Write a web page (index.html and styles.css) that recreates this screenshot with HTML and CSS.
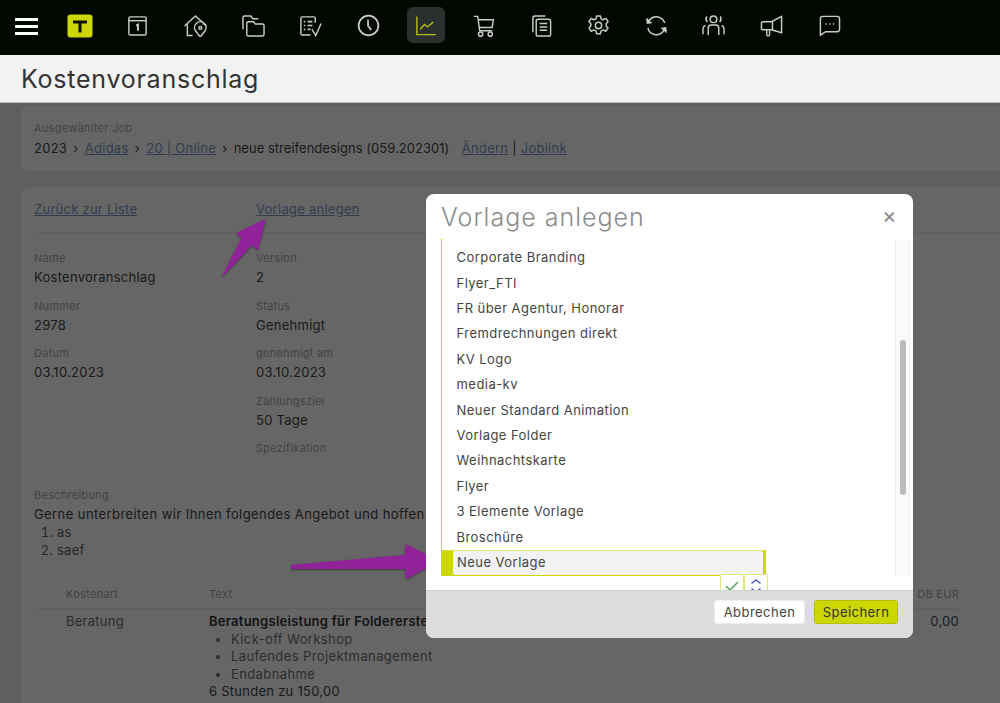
FILE: index.html
```html
<!DOCTYPE html>
<html lang="de">
<head>
<meta charset="utf-8">
<title>Kostenvoranschlag</title>
<link rel="stylesheet" href="styles.css">
</head>
<body>
<header class="topbar">
  <button class="burger" aria-label="Menü"><span></span><span></span><span></span></button>
  <div class="logo"><svg viewBox="0 0 26 24" width="26" height="24"><rect x="0.5" y="0.5" width="25" height="23" rx="3" fill="#ccd600"/><path d="M6 6.500h14v3h-5.500v9h-3v-9H6z" fill="#0a0f00"/></svg></div>
  <nav class="nav">
    <a class="nav-item"><svg viewBox="0 0 24 24"><rect x="3" y="3" width="18" height="19" rx="1.500"/><path d="M3 7h18"/><path d="M10.500 12l2-1v6.500" stroke-width="2"/></svg></a>
    <a class="nav-item"><svg viewBox="0 0 24 24"><path d="M0.500 12.500L12 2l11.500 10.500"/><path d="M3.500 10.500V22.500H9"/><path d="M20.500 10V11"/><path d="M17 24l-5-6.500a6 6 0 1 1 10 0z"/><circle cx="17" cy="14.500" r="1.500"/></svg></a>
    <a class="nav-item"><svg viewBox="0 0 24 24"><path d="M1 16V3.500Q1 2 2.500 2H9l2.500 3H17"/><path d="M5 9.500Q5 8 6.500 8H12l2 2.500h7.500Q23 10.500 23 12v9.500Q23 23 21.500 23h-15Q5 23 5 21.500z"/></svg></a>
    <a class="nav-item"><svg viewBox="0 0 24 24"><path d="M17 9V4.500Q17 3 15.500 3h-12Q2 3 2 4.500v16Q2 22 3.500 22H12"/><path d="M5 8h1.500M9 8h5M5 12h1.500M9 12h5M5 16h1.500M9 16h3" stroke-width="1.800"/><path d="M13.500 16l4 6.500L23 10"/></svg></a>
    <a class="nav-item"><svg viewBox="0 0 24 24"><circle cx="12" cy="12" r="10.300" stroke-width="1.800"/><path d="M11.500 6v6.500l3.500 4" stroke-width="1.800"/></svg></a>
    <a class="nav-item active"><svg viewBox="0 0 24 24"><path d="M3 2.500V21.500H22.500"/><path d="M6.500 16l4.500-5 3 2.500 6-5"/></svg></a>
    <a class="nav-item"><svg viewBox="0 0 24 24"><path d="M2 2.500h4l2 15h13"/><path d="M6.300 6h16l-1.300 8H7.500"/><circle cx="9" cy="21" r="2.200"/><circle cx="19" cy="21" r="2.200"/></svg></a>
    <a class="nav-item"><svg viewBox="0 0 24 24"><path d="M16 2H5.500Q3 2 3 4.500V19"/><rect x="6.500" y="5.500" width="15" height="17.500" rx="2"/><path d="M10 10h8M10 13.500h8M10 17h8"/></svg></a>
    <a class="nav-item"><svg viewBox="0 0 24 24"><circle cx="12" cy="12" r="3.300"/><path d="M10 2h4l.7 3 2.100 1 2.800-1.400 2.400 3.200-2 2.300v2.400l2 2.300-2.400 3.200-2.800-1.400-2.100 1-.7 3h-4l-.7-3-2.100-1-2.800 1.400-2.400-3.200 2-2.300v-2.400l-2-2.300L4.400 4.600 7.200 6l2.100-1z" stroke-linejoin="round"/></svg></a>
    <a class="nav-item"><svg viewBox="0 0 24 24"><path d="M20.500 9.500A9 9 0 0 0 5 6l-2.500 3"/><path class="solid" d="M2 4.500l.5 5 4.500-.5"/><path d="M3 14.500A9 9 0 0 0 19 18l2.500-3"/><path class="solid" d="M22 19.500l-.5-5-4.500.5"/></svg></a>
    <a class="nav-item"><svg viewBox="0 0 24 24"><circle cx="12" cy="5.500" r="3.500"/><path d="M5 2.500Q3 5.500 5.500 8.500M19 2.500Q21 5.500 18.500 8.500"/><path d="M6.500 22V14.500Q6.500 11.500 9.500 11.500h5Q17.500 11.500 17.500 14.500V22"/><path d="M1 21v-5.500Q1 13 3.500 12M23 21v-5.500Q23 13 20.500 12"/></svg></a>
    <a class="nav-item"><svg viewBox="0 0 24 24"><path d="M22.500 2.500v17L12 16.500H3.500Q1.500 16.500 1.500 14.500V9.500Q1.500 8 3.500 8H12z"/><path d="M7 16.500V21.500Q7 23 8.500 23t1.500-1.500V17"/><path d="M13 8v8.500"/></svg></a>
    <a class="nav-item"><svg viewBox="0 0 24 24"><path d="M5 2.500h15Q22.500 2.500 22.500 5v11Q22.500 18.500 20 18.500H8L2.500 22V5Q2.500 2.500 5 2.500z"/><path d="M8 10.500h1M12 10.500h1M16 10.500h1" stroke-width="2"/></svg></a>
  </nav>
</header>
<div class="pagehead"><h1 class="pagetitle">Kostenvoranschlag</h1></div>
<main class="content">
  <section class="card jobcard">
    <div class="label">Ausgewählter Job</div>
    <div class="crumbs">2023<i>›</i><a>Adidas</a><i>›</i><a>20 | Online</a><i>›</i><span class="jobname">neue streifendesigns (059.202301)</span><a class="crumb-link">Ändern</a> | <a>Joblink</a></div>
  </section>
  <section class="card detail">
    <div class="linkrow"><a>Zurück zur Liste</a><a>Vorlage anlegen</a></div>
    <div class="fields">
      <div class="col">
        <div class="field"><div class="label">Name</div><div>Kostenvoranschlag</div></div>
        <div class="field"><div class="label">Nummer</div><div>2978</div></div>
        <div class="field"><div class="label">Datum</div><div>03.10.2023</div></div>
      </div>
      <div class="col">
        <div class="field"><div class="label">Version</div><div>2</div></div>
        <div class="field"><div class="label">Status</div><div>Genehmigt</div></div>
        <div class="field"><div class="label">genehmigt am</div><div>03.10.2023</div></div>
        <div class="field"><div class="label">Zahlungsziel</div><div>50 Tage</div></div>
        <div class="field"><div class="label">Spezifikation</div></div>
      </div>
    </div>
    <div class="desc">
      <div class="label">Beschreibung</div>
      <div class="desctext">Gerne unterbreiten wir Ihnen folgendes Angebot und hoffen</div>
      <ol class="desclist"><li>as</li><li>saef</li></ol>
    </div>
    <div class="thead"><span class="label">Kostenart</span><span class="label">Text</span><span class="label amount">DB EUR</span></div>
    <div class="trow">
      <div class="soft">Beratung</div>
      <div>
        <strong>Beratungsleistung für Foldererstellung</strong>
        <ul class="tasks"><li>Kick-off Workshop</li><li>Laufendes Projektmanagement</li><li>Endabnahme</li></ul>
        <div>6 Stunden zu 150,00</div>
      </div>
      <div class="amount">0,00</div>
    </div>
  </section>
  <div class="overlay"></div>
</main>
<svg class="arrows" viewBox="0 0 1000 703" width="1000" height="703" aria-hidden="true">
  <defs><filter id="sh" x="-20%" y="-20%" width="140%" height="140%"><feDropShadow dx="0" dy="1" stdDeviation="1.200" flood-color="#000" flood-opacity=".45"/></filter></defs>
  <path class="arrow" d="M221.500 277.500L241.500 238L236 233L265.700 219L258 250L252 245Z"/>
  <path class="arrow" d="M291 565L405 555L405.500 544L439.500 561L406 579L405 569L291 569Z"/>
</svg>
<section class="modal">
  <div class="modal-head"><h2 class="modal-title">Vorlage anlegen</h2><span class="close">×</span></div>
  <div class="modal-body">
    <div class="list">
      <div class="item">Corporate Branding</div>
      <div class="item">Flyer_FTI</div>
      <div class="item">FR über Agentur, Honorar</div>
      <div class="item">Fremdrechnungen direkt</div>
      <div class="item">KV Logo</div>
      <div class="item">media-kv</div>
      <div class="item">Neuer Standard Animation</div>
      <div class="item">Vorlage Folder</div>
      <div class="item">Weihnachtskarte</div>
      <div class="item">Flyer</div>
      <div class="item">3 Elemente Vorlage</div>
      <div class="item">Broschüre</div>
      <div class="item selected"><span class="selected-text">Neue Vorlage</span></div>
    </div>
    <div class="scrolltrack"><div class="thumb"></div></div>
    <div class="tools">
      <span class="tool"><svg viewBox="0 0 16 16" width="16" height="16"><path d="M2 8l4 4 8-8" fill="none" stroke="#5cab62" stroke-width="1.600"/></svg></span>
      <span class="tool"><svg viewBox="0 0 16 16" width="16" height="16"><path d="M3.500 5.500L8 2l4.500 3.500M3.500 10.500L8 14l4.500-3.500" fill="none" stroke="#4a5fb5" stroke-width="1.500"/></svg></span>
    </div>
  </div>
  <div class="modal-foot"><button class="btn">Abbrechen</button><button class="btn primary">Speichern</button></div>
</section>
</body>
</html>
```
FILE: styles.css
```css
* { box-sizing: border-box; }
html, body { margin: 0; height: 703px; overflow: hidden; }
body {
  font: 13px/18px Inter, "Noto Sans", sans-serif;
  letter-spacing: .02em;
  color: #444;
  background: #f2f2f2;
  display: flex;
  flex-direction: column;
}
a { color: #7c99c4; text-decoration: underline; }
h1, h2 { margin: 0; font-weight: 400; }

.topbar {
  height: 55px;
  flex: none;
  background: #010800;
  display: flex;
  align-items: flex-start;
}
.burger {
  margin: 18px 0 0 15px;
  width: 23px;
  height: 17px;
  padding: 0;
  border: 0;
  background: none;
  display: flex;
  flex-direction: column;
  justify-content: space-between;
}
.burger span { height: 3px; background: #fff; }
.logo { margin: 14px 0 0 29px; width: 26px; height: 24px; }
.nav { display: flex; margin: 7px 0 0 16.200px; }
.nav-item {
  width: 57.600px;
  height: 36px;
  display: flex;
  align-items: center;
  justify-content: center;
  position: relative;
}
.nav-item svg {
  width: 23px;
  height: 23px;
  fill: none;
  stroke: #ccc;
  stroke-width: 1.500;
}
.nav-item svg .solid { fill: #ccc; }
.nav-item.active::before {
  content: "";
  position: absolute;
  left: 10px;
  width: 38px;
  top: 0;
  bottom: 0;
  border-radius: 6px;
  background: #2b302e;
}
.nav-item.active svg { position: relative; stroke: #b4bc12; }

.pagehead {
  height: 48px;
  flex: none;
  padding-left: 21px;
  background: #f2f2f2;
  border-bottom: 1px solid #bbb;
  display: flex;
  align-items: center;
}
.pagetitle { font-size: 25px; line-height: 48px; letter-spacing: .03em; color: #333; }

.content {
  flex: 1;
  position: relative;
  overflow: hidden;
  padding: 3px 0 0 21px;
  background: #eee;
  display: flex;
  flex-direction: column;
  gap: 16px;
}
.overlay { position: absolute; inset: 0; background: rgba(0, 0, 0, .6); }
.card { background: #fff; border-radius: 8px 0 0 8px; padding: 0 0 0 13px; flex: none; }
.jobcard { height: 65px; padding-top: 13px; }
.label { font-size: 11px; line-height: 19px; color: #aaa; }
.crumbs { margin-top: 1px; }
.crumbs i { font-style: normal; margin: 0 6.200px; }
.jobname { letter-spacing: .002em; }
.crumb-link { margin-left: 12.500px; }

.detail { height: 700px; padding-right: 41px; }
.linkrow {
  height: 46px;
  margin-right: -41px;
  padding-top: 13px;
  border-bottom: 1px solid #eee;
  display: grid;
  grid-template-columns: 222px 1fr;
}
.fields { display: grid; grid-template-columns: 222px 1fr; padding-top: 16px; height: 251px; }
.field { height: 47.600px; }
.desc { padding-top: 2px; height: 101px; }
.desctext { letter-spacing: .032em; }
.desclist { margin: 0; padding-left: 23px; color: #666; }
.thead {
  height: 24px;
  padding-left: 32px;
  border-bottom: 1px solid #eee;
  display: grid;
  grid-template-columns: 143px 1fr 80px;
}
.amount { text-align: right; }
.trow {
  padding: 4px 0 0 32px;
  line-height: 17.500px;
  display: grid;
  grid-template-columns: 143px 1fr 80px;
}
.soft { color: #707070; }
.trow strong { font-weight: 600; display: block; color: #333; }
.tasks { margin: 0; padding-left: 22px; color: #707070; letter-spacing: .03em; }

.arrows { position: absolute; left: 0; top: 0; pointer-events: none; }
.arrow { fill: #92209a; filter: url(#sh); }

.modal {
  position: absolute;
  left: 426px;
  top: 194px;
  width: 487px;
  height: 444px;
  background: #fff;
  border-radius: 8px;
  overflow: hidden;
  display: flex;
  flex-direction: column;
  letter-spacing: .035em;
}
.modal-head {
  height: 45px;
  flex: none;
  padding: 0 15px;
  display: flex;
  align-items: center;
  justify-content: space-between;
}
.modal-title { font-size: 25px; font-weight: 300; letter-spacing: .04em; color: #8c8c8c; }
.close { font-size: 22px; line-height: 22px; color: #888; margin: -3px 1px 0 0; }
.modal-body {
  height: 351px;
  flex: none;
  position: relative;
  padding-left: 15px;
  display: flex;
  align-items: flex-start;
}
.list {
  width: 455px;
  height: 337px;
  padding-top: 6.300px;
  border-left: 1.500px solid #ccd600;
  border-right: 1px solid #eee;
  overflow: hidden;
}
.item { height: 25.400px; padding-left: 14.500px; line-height: 25px; color: #444; }
.item.selected {
  width: 325px;
  height: 27px;
  margin-left: -1.500px;
  padding: 0;
  background: #ccd600;
  border-style: solid;
  border-color: #e2e86e #ccd600 #ccd600 #ccd600;
  border-width: 1.500px 3px 2px 12px;
  line-height: 23px;
}
.selected-text {
  display: block;
  height: 100%;
  padding-left: 4.500px;
  border-radius: 2px;
  background: #f2f2f2;
}
.scrolltrack {
  width: 14px;
  height: 337px;
  background: #fafafa;
  padding: 101px 3px 0 3.500px;
  border-right: 1px solid #f0f0f0;
}
.thumb { height: 155px; border-radius: 4px; background: #bbb; }
.tools { position: absolute; left: 294px; top: 335px; display: flex; }
.tool {
  width: 24px;
  height: 24px;
  background: #fff;
  border: 1.500px solid #e2e86e;
  border-bottom: 0;
  border-radius: 2px 2px 0 0;
  display: flex;
  justify-content: center;
  padding-top: 3px;
}
.modal-foot {
  flex: 1;
  position: relative;
  background: #dcdcdc;
  border-top: 1px solid #d0d0d0;
  padding: 9px 15px 0 0;
  display: flex;
  justify-content: flex-end;
  align-items: flex-start;
  gap: 9px;
}
.btn {
  font: inherit;
  letter-spacing: inherit;
  height: 24px;
  line-height: 22px;
  padding: 0;
  border: 1px solid #eee;
  border-radius: 3px;
  background: #fff;
  color: #444;
  width: 91px;
}
.btn.primary { width: 84px; background: #ccd600; border-color: #b5be00; color: #333; }
```
